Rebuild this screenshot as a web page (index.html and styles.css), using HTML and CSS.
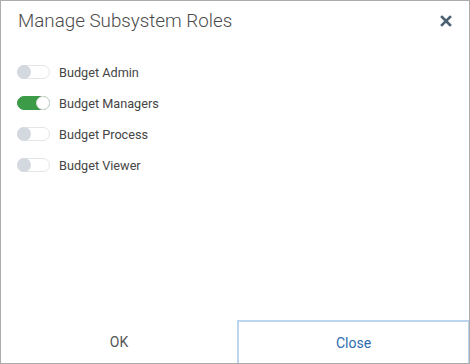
FILE: index.html
```html
<!DOCTYPE html>
<html lang="en">
<head>
  <meta charset="UTF-8">
  <meta name="viewport" content="width=device-width, initial-scale=1.0">
  <title>Manage Subsystem Roles</title>
  <link rel="stylesheet" href="styles.css">
</head>
<body>
  <div class="dialog">
    <header class="dialog-header">
      <h3>Manage Subsystem Roles</h3>
      <button class="close-x" aria-label="Close">
        <svg width="12" height="12" viewBox="0 0 12 12">
          <path d="M2 2 L10 10 M10 2 L2 10" stroke="#4b6072" stroke-width="2.6" stroke-linecap="square"/>
        </svg>
      </button>
    </header>
    <div class="dialog-body">
      <label class="role">
        <span class="switch"><span class="knob"></span></span>
        <span class="role-name">Budget Admin</span>
      </label>
      <label class="role">
        <span class="switch on"><span class="knob"></span></span>
        <span class="role-name">Budget Managers</span>
      </label>
      <label class="role">
        <span class="switch"><span class="knob"></span></span>
        <span class="role-name">Budget Process</span>
      </label>
      <label class="role">
        <span class="switch"><span class="knob"></span></span>
        <span class="role-name">Budget Viewer</span>
      </label>
    </div>
    <footer class="dialog-footer">
      <button class="btn btn-ok">OK</button>
      <button class="btn btn-close">Close</button>
    </footer>
  </div>
</body>
</html>
```

FILE: styles.css
```css
* {
  margin: 0;
  padding: 0;
  box-sizing: border-box;
}

html, body {
  height: 100%;
}

body {
  font-family: Roboto, "Liberation Sans", Arial, sans-serif;
  background-color: #fff;
}

.dialog {
  display: flex;
  flex-direction: column;
  height: 364px;
  border: 1px solid #ababab;
  background-color: #fff;
}

.dialog-header {
  display: flex;
  justify-content: space-between;
  align-items: center;
  padding: 0 17px 0 17px;
  height: 40px;
}

.dialog-header h3 {
  font-size: 18.8px;
  font-weight: 300;
  color: #4a4a4a;
  letter-spacing: 0;
}

.close-x {
  border: none;
  background: none;
  width: 12px;
  height: 12px;
  margin-right: 0;
  margin-top: 0;
  display: flex;
  cursor: pointer;
}

.dialog-body {
  flex: 1;
  padding: 21px 16px 0 16px;
  display: flex;
  flex-direction: column;
  gap: 11px;
}

.role {
  display: flex;
  align-items: center;
  gap: 9px;
  height: 20px;
  cursor: pointer;
}

.switch {
  position: relative;
  width: 33px;
  height: 14px;
  border-radius: 7px;
  border: 1px solid #e3e6e9;
  background-color: #fff;
}

.switch .knob {
  position: absolute;
  top: -1px;
  left: -1px;
  width: 14px;
  height: 14px;
  border-radius: 50%;
  background-color: #d3d9df;
}

.switch.on {
  background-color: #3b9b47;
  border-color: #3b9b47;
}

.switch.on .knob {
  left: auto;
  right: -1px;
  background-color: #fff;
  border: 1px solid #dcdcdc;
}

.role-name {
  font-size: 12.7px;
  color: #454545;
}

.dialog-footer {
  display: flex;
  height: 43px;
}

.btn {
  border: none;
  background: #fff;
  font-family: inherit;
  font-size: 14px;
  color: #555;
  cursor: pointer;
}

.btn-ok {
  width: 236px;
}

.btn-close {
  flex: 1;
  color: #2d6cad;
  border: 2px solid #bcd5ee;
  border-bottom: none;
  border-right-width: 1px;
}
```
